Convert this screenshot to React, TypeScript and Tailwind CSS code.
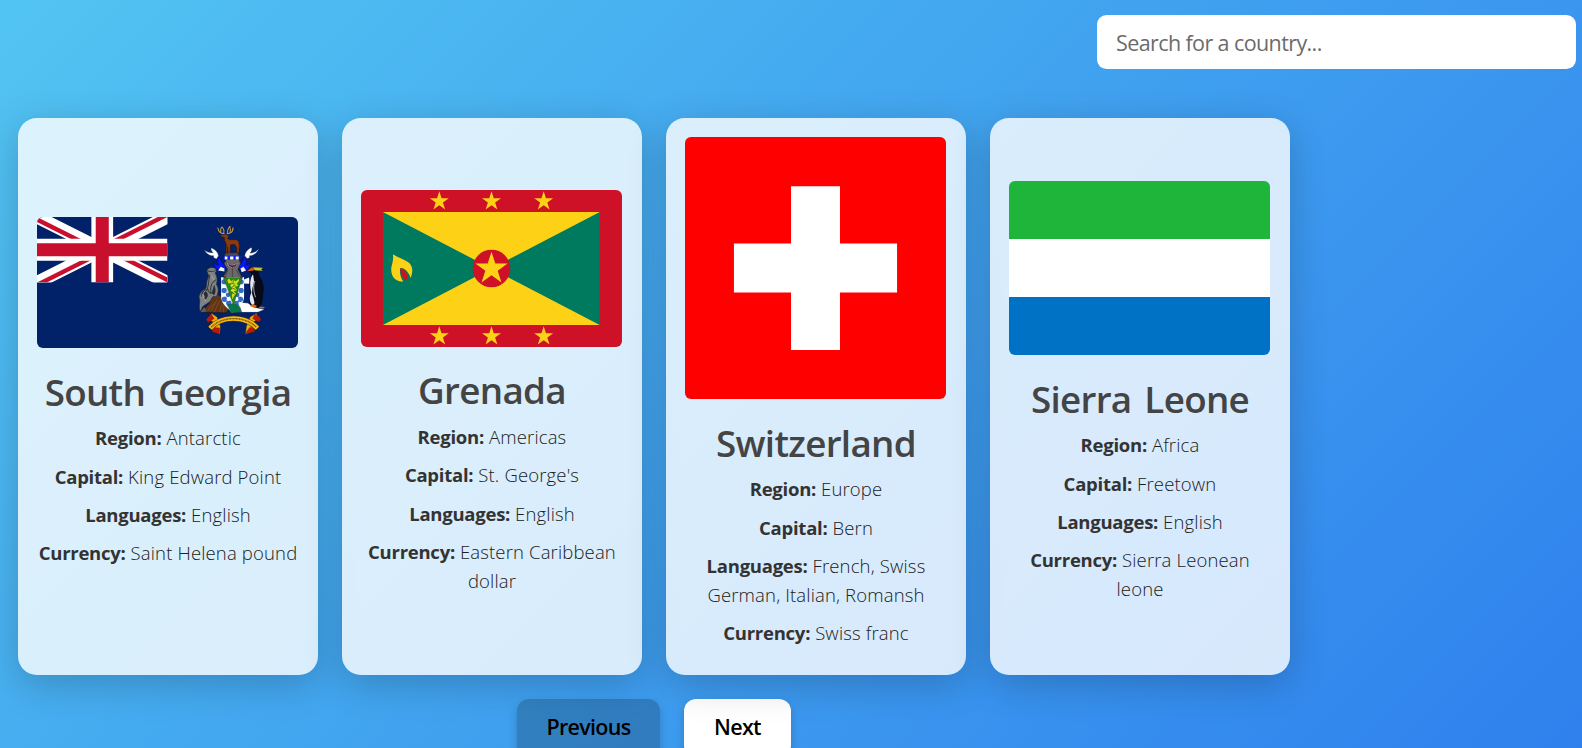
import type { ReactNode } from "react";

const STAR =
  "M0,-1 L0.2245,-0.309 L0.9511,-0.309 L0.3633,0.118 L0.5878,0.809 L0,0.382 L-0.5878,0.809 L-0.3633,0.118 L-0.9511,-0.309 L-0.2245,-0.309 Z";

function CoatOfArms() {
  return (
    <g transform="translate(-111 -351)" strokeLinejoin="round" strokeLinecap="round">
      {/* antlers and reindeer */}
      <g fill="none" stroke="#c79a4b" strokeWidth="3">
        <path d="M675 402 C668 401 658 399 656 390 M664 399 C661 391 663 385 665 382 M671 401 C674 394 671 385 667 381 M658 394 L654 384" />
        <path d="M681 402 C690 401 699 397 700 387 M690 399 C693 391 692 384 689 380 M684 400 C682 392 686 384 691 379 M697 394 L700 383" />
      </g>
      <path d="M661 406 L673 403 L683 404 L686 409 L683 415 L690 419 L711 419 L717 424 L719 437 L717 459 L711 459 L711 442 L705 433 L692 434 L691 459 L685 459 L684 440 L682 459 L678 459 L680 433 L675 423 L674 412 L665 410 Z" fill="#8c3a0b" stroke="#32170b" strokeWidth="1.5" />
      <path d="M674 464 L681 458 L714 458 L719 468 L674 469 Z" fill="#4a4a50" stroke="#17171c" strokeWidth="1" />
      {/* mantling */}
      <path d="M614 450 C622 457 631 459 640 458 C635 452 632 447 635 444 C645 448 656 456 656 469 L651 476 C642 475 640 471 642 467 C629 468 619 460 614 450 Z" fill="#fff" stroke="#27345d" strokeWidth="1" />
      <path d="M777 446 C770 455 761 459 751 459 C756 453 758 447 755 442 C744 448 735 457 735 469 L741 475 C749 475 751 471 749 467 C763 467 773 457 777 446 Z" fill="#fff" stroke="#27345d" strokeWidth="1" />
      <path d="M655 471 C668 476 665 491 673 493 L675 480 L682 480 C679 493 680 507 669 511 C656 514 641 503 640 488 C649 493 652 496 656 493 C649 485 653 477 655 471 Z" fill="#0717f2" stroke="#00074c" strokeWidth="1.5" />
      <path d="M738 471 C725 476 728 491 720 493 L718 480 L711 480 C714 493 713 507 724 511 C739 516 752 504 754 488 C745 493 741 496 737 493 C744 485 740 477 738 471 Z" fill="#0717f2" stroke="#00074c" strokeWidth="1.5" />
      <path d="M655 511 L663 500 L674 505 L674 514 Z M722 506 L731 500 L739 511 L726 516 Z" fill="#eef3ff" />
      {/* helmet */}
      <path d="M673 490 L681 477 L717 477 L723 489 L715 507 L724 526 L723 539 L674 539 L672 527 L683 508 Z" fill="#69696c" stroke="#1f1f24" strokeWidth="2" />
      <path d="M680 487 L697 494 L718 486 L710 499 L696 505 L684 497 Z" fill="#a2a2a5" stroke="#333" strokeWidth="1" />
      <path d="M684 489 C693 499 705 498 713 488 L708 498 L697 502 L688 497 Z" fill="#5b1740" />
      <path d="M698 503 L698 536 M684 511 L676 529 M711 511 L719 527" stroke="#38383b" strokeWidth="2" />
      <rect x="672" y="468" width="50" height="11" rx="3" fill="#0f22df" />
      <path d="M675 469 h8 v9 h-8 Z M691 469 h10 v9 h-10 Z M708 469 h9 v9 h-9 Z" fill="#fff" />
      {/* mound */}
      <path d="M618 636 L608 631 L627 612 L639 590 L655 583 L675 597 L687 625 L681 637 Z" fill="#613514" stroke="#281408" strokeWidth="1.5" />
      <path d="M634 631 L651 600 M644 635 L659 603 M660 634 L667 610 M671 635 L673 610 M624 630 L641 611" stroke="#8a5532" strokeWidth="2" />
      <path d="M602 636 L613 621 L620 634 Z M689 636 L707 623 L735 635 Z" fill="#68604e" />
      {/* fur seal */}
      <path d="M621 511 C625 501 639 500 647 505 L650 513 L646 518 C652 529 654 540 650 553 C659 565 655 580 650 589 L639 590 L631 604 L613 616 C602 621 608 635 600 631 C597 619 600 611 600 599 C594 588 602 573 617 566 C623 557 618 544 626 531 C628 521 622 520 621 511 Z" fill="#7f8283" stroke="#252b32" strokeWidth="2" />
      <path d="M624 512 C631 516 638 514 646 512 M630 525 C625 545 629 552 621 570 M648 539 C633 548 630 562 634 580 C626 577 624 570 625 567 C611 568 603 580 606 588" fill="none" stroke="#34393c" strokeWidth="3" />
      <path d="M643 554 C650 569 647 580 643 585 L636 579 Z M620 575 C628 584 624 597 611 600 C620 588 612 581 605 581 C610 575 615 573 620 575 Z" fill="#292c2f" />
      <path d="M614 574 C606 584 609 592 617 602 M636 527 L642 538" stroke="#b0b3b4" strokeWidth="2.5" fill="none" />
      {/* shield */}
      <path d="M664 531 H733 V589 C733 611 716 623 699 638 C682 623 664 611 664 589 Z" fill="#fff" />
      <g fill="#356bc1">
        <circle cx="673" cy="545" r="8" /><circle cx="724" cy="545" r="8" />
        <circle cx="673" cy="571" r="8" /><circle cx="724" cy="571" r="8" />
        <circle cx="674" cy="597" r="8" /><circle cx="722" cy="597" r="8" />
        <circle cx="687" cy="608" r="8" /><circle cx="711" cy="608" r="8" />
        <circle cx="685" cy="584" r="7" /><circle cx="713" cy="584" r="7" />
      </g>
      <g fill="#fff">
        <circle cx="672" cy="558" r="5" /><circle cx="725" cy="558" r="5" />
        <circle cx="672" cy="584" r="5" /><circle cx="724" cy="584" r="5" />
        <circle cx="686" cy="597" r="5" /><circle cx="711" cy="597" r="5" />
      </g>
      <path d="M671 532 H728 L701 614 Z" fill="#238719" stroke="#263b15" strokeWidth="1" />
      <path d="M683 540 L688 535 L694 543 L701 538 L708 544 L716 536 L718 542 L711 551 L716 557 L705 560 L712 570 L702 574 L709 580 L702 589 L698 598 L696 584 L701 577 L692 572 L698 564 L691 557 L696 549 L686 550 Z" fill="#d9da1b" />
      <path d="M695 549 L704 552 M697 563 L707 568 M699 577 L704 582 M701 541 L700 547 M706 556 L699 559" stroke="#267324" strokeWidth="2.5" />
      <path d="M683 614 L699 610 L718 616 L725 635 L694 638 Z" fill="#087649" stroke="#114325" strokeWidth="1" />
      <path d="M674 527 L681 532 L671 536 Z M724 526 L729 534 L719 534 Z" fill="#7b254b" />
      <path d="M733 538 L748 532 L749 551 L733 550 Z" fill="#fff" />
      {/* ice and penguin */}
      <path d="M716 607 L744 609 L763 622 L792 628 L774 635 L727 635 Z" fill="#fff" stroke="#bbc9d6" strokeWidth="1" />
      <path d="M749 512 C753 505 763 502 771 508 C778 515 774 523 779 530 C790 545 793 565 788 584 C789 603 783 616 776 621 L754 615 C747 603 750 591 754 578 C746 560 751 544 755 528 C758 518 754 518 749 512 Z" fill="#080b15" stroke="#00050e" strokeWidth="2" />
      <path d="M760 522 C749 534 750 559 755 578 C746 595 751 608 758 615 C769 612 762 602 761 592 C753 578 759 560 763 543 Z" fill="#e2e6f8" />
      <path d="M765 544 C760 556 761 572 767 590" stroke="#fff" strokeWidth="2" fill="none" />
      <path d="M742 513 L756 502 L767 507 L762 511 Z" fill="#e95418" />
      <path d="M759 501 L789 503 L785 509 L790 512 L767 511 Z" fill="#d1c522" stroke="#3b572b" strokeWidth="1" />
      <path d="M749 617 L760 611 L772 617 L766 622 Z M781 619 L796 620 L791 625 L777 624 Z" fill="#d76719" />
      {/* scroll */}
      <path d="M635 639 L652 650 L662 678 L660 702 L638 693 L649 672 L629 658 Z M770 639 L751 650 L740 678 L737 701 L765 693 L752 672 L775 656 Z" fill="#eaad15" stroke="#422817" strokeWidth="1.5" />
      <path d="M634 641 L643 655 L625 667 L619 658 Z M642 682 L659 683 L659 701 L637 694 Z M765 643 L759 655 L777 665 L784 658 L779 649 Z M750 682 L738 698 L765 695 L761 682 Z" fill="#be1809" stroke="#4b140d" strokeWidth="1" />
      <path d="M631 684 C664 645 737 645 773 684" fill="none" stroke="#513513" strokeWidth="17" strokeLinecap="butt" />
      <path d="M631 684 C664 645 737 645 773 684" fill="none" stroke="#f8b916" strokeWidth="14" strokeLinecap="butt" />
      <path d="M635 681 C668 646 736 647 769 680" fill="none" stroke="#5a4516" strokeWidth="4" strokeLinecap="butt" strokeDasharray="3 1.5" />
    </g>
  );
}

function SouthGeorgiaFlag() {
  return (
    <svg viewBox="0 0 784 392" preserveAspectRatio="none" className="block h-[131px] w-[261px] rounded-[6px]">
      <rect width="784" height="392" fill="#012169" />
      <svg width="392" height="196" viewBox="0 0 60 30" preserveAspectRatio="none">
        <clipPath id="saltire">
          <path d="M30,15 h30 v15 z v15 h-30 z h-30 v-15 z v-15 h30 z" />
        </clipPath>
        <path d="M0,0 L60,30 M60,0 L0,30" stroke="#fff" strokeWidth="6" />
        <path d="M0,0 L60,30 M60,0 L0,30" stroke="#C8102E" strokeWidth="4" clipPath="url(#saltire)" />
        <path d="M30,0 V30 M0,15 H60" stroke="#fff" strokeWidth="10" />
        <path d="M30,0 V30 M0,15 H60" stroke="#C8102E" strokeWidth="6" />
      </svg>
      <CoatOfArms />
    </svg>
  );
}

function GrenadaFlag() {
  return (
    <svg viewBox="0 0 785 471" preserveAspectRatio="none" className="block h-[157px] w-[261px] rounded-[6px]">
      <rect width="785" height="471" fill="#CE1126" />
      <rect x="66" y="66" width="652" height="339" fill="#007A5E" />
      <path d="M66 66 H718 L66 405 H718 Z" fill="#FCD116" />
      <circle cx="392.5" cy="235.5" r="56.5" fill="#CE1126" />
      <path d={STAR} transform="translate(392.5 236) scale(51)" fill="#FCD116" />
      {[235.5, 392.5, 549.5].map((x) =>
        [34, 439].map((y) => (
          <path key={`${x}-${y}`} d={STAR} transform={`translate(${x} ${y}) scale(30)`} fill="#FCD116" />
        )),
      )}
      <path d="M118 236 C122 232 132 240 138 252 C141 260 140 267 137 271 C127 266 118 252 118 236 Z" fill="#CE1126" />
      <path d="M96 193 C113 205 133 208 146 220 C158 233 155 251 149 264 C146 247 128 231 118 234 C115 250 121 267 127 274 C109 278 90 263 91 238 C91 225 99 214 96 193 Z" fill="#FCD116" />
    </svg>
  );
}

function SwitzerlandFlag() {
  return (
    <svg viewBox="0 0 32 32" preserveAspectRatio="none" className="block h-[262px] w-[261px] rounded-[6px]">
      <path d="M0 0h32v32H0z" fill="#f00" />
      <path d="M13 6h6v7h7v6h-7v7h-6v-7H6v-6h7z" fill="#fff" />
    </svg>
  );
}

function SierraLeoneFlag() {
  return (
    <svg viewBox="0 0 9 6" className="block w-[261px] rounded-[6px]">
      <path fill="#0072C6" d="M0 0h9v6H0z" />
      <path fill="#fff" d="M0 0h9v4H0z" />
      <path fill="#1EB53A" d="M0 0h9v2H0z" />
    </svg>
  );
}

type Country = {
  name: string;
  flag: ReactNode;
  region: string;
  capital: string;
  languages: string;
  currency: string;
};

const countries: Country[] = [
  { name: "South Georgia", flag: <SouthGeorgiaFlag />, region: "Antarctic", capital: "King Edward Point", languages: "English", currency: "Saint Helena pound" },
  { name: "Grenada", flag: <GrenadaFlag />, region: "Americas", capital: "St. George's", languages: "English", currency: "Eastern Caribbean dollar" },
  { name: "Switzerland", flag: <SwitzerlandFlag />, region: "Europe", capital: "Bern", languages: "French, Swiss German, Italian, Romansh", currency: "Swiss franc" },
  { name: "Sierra Leone", flag: <SierraLeoneFlag />, region: "Africa", capital: "Freetown", languages: "English", currency: "Sierra Leonean leone" },
];

function Fact({ label, value }: { label: string; value: string }) {
  return (
    <p className="mb-[9.6px] text-[18.5px] leading-[28.8px] font-light tracking-[0.15px] text-[#202020] last:mb-[7.6px]">
      <strong className="font-bold tracking-[-0.25px] text-[#333]">{label}:</strong> {value}
    </p>
  );
}

function CountryCard({ country }: { country: Country }) {
  return (
    <article className="flex w-[300px] flex-col justify-center rounded-[19px] bg-white/80 p-[19px] text-center shadow-[0_9.6px_38.4px_rgba(0,0,0,0.2)]">
      {country.flag}
      <h2 className="mt-[18.5px] h-[57.5px] text-[36.8px] leading-[50px] font-[550] tracking-[-0.7px] whitespace-nowrap text-[#444] [word-spacing:4px]">
        {country.name}
      </h2>
      <Fact label="Region" value={country.region} />
      <Fact label="Capital" value={country.capital} />
      <Fact label="Languages" value={country.languages} />
      <Fact label="Currency" value={country.currency} />
    </article>
  );
}

export default function App() {
  return (
    <div className="h-[748px] overflow-hidden bg-[linear-gradient(135deg,#52c4f2,#2f80ed)] font-['Open_Sans','Noto_Sans',sans-serif]">
      <header className="flex justify-end pt-[15px] pr-[6px]">
        <input
          type="text"
          placeholder="Search for a country..."
          className="h-[54px] w-[479px] rounded-[9.6px] bg-white px-[19px] text-[21.5px] tracking-[-0.6px] text-[#333] outline-none placeholder:text-[#6b6b6b]"
        />
      </header>
      <main className="w-[1308px] pt-[49px]">
        <section className="relative z-10 flex h-[557px] justify-center gap-6">
          {countries.map((c) => (
            <CountryCard key={c.name} country={c} />
          ))}
        </section>
        <nav className="mt-6 flex justify-center gap-6">
          <button disabled className="h-[58px] w-[143px] rounded-[12px] bg-black/20 pb-[2px] text-[21.5px] font-semibold tracking-[-0.7px] text-black shadow-[0_5px_10px_rgba(0,0,0,0.2)]">
            Previous
          </button>
          <button className="h-[58px] w-[107px] rounded-[12px] bg-white pb-[2px] text-[21.5px] font-semibold tracking-[-0.7px] text-black shadow-[0_5px_10px_rgba(0,0,0,0.2)]">
            Next
          </button>
        </nav>
      </main>
    </div>
  );
}
